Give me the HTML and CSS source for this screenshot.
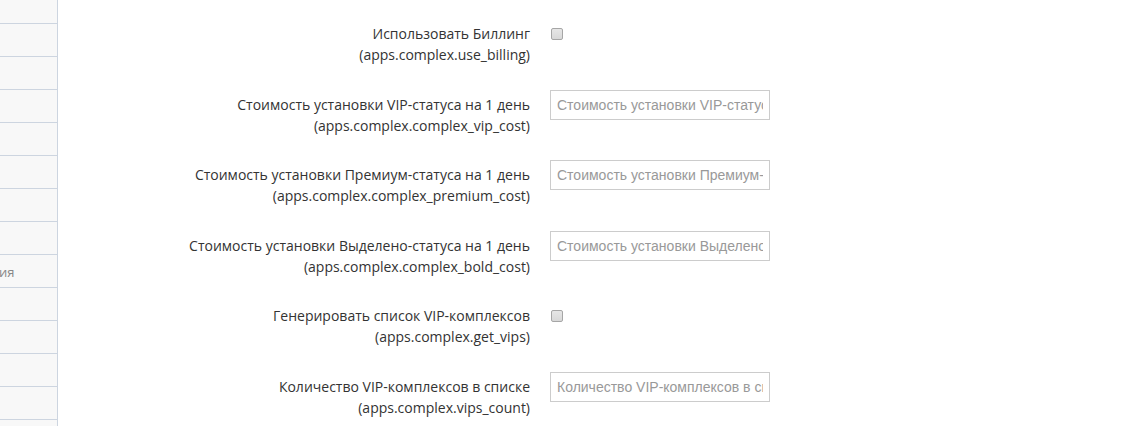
FILE: index.html
```html
<!DOCTYPE html>
<html lang="ru">
<head>
<meta charset="utf-8">
<title>Настройки</title>
<link rel="stylesheet" href="styles.css">
</head>
<body>
<div class="layout">
  <aside class="sidebar">
    <div class="nav-row nav-row-first"></div>
    <div class="nav-row"></div>
    <div class="nav-row"></div>
    <div class="nav-row"></div>
    <div class="nav-row"></div>
    <div class="nav-row"></div>
    <div class="nav-row"></div>
    <div class="nav-row"></div>
    <div class="nav-row"><span class="nav-text">ия</span></div>
    <div class="nav-row"></div>
    <div class="nav-row"></div>
    <div class="nav-row"></div>
    <div class="nav-row"></div>
    <div class="nav-row"></div>
  </aside>
  <main class="content">
    <form class="settings">
      <div class="group">
        <label class="label">Использовать Биллинг<br>(apps.complex.use_billing)</label>
        <div class="control"><input type="checkbox" class="check"></div>
      </div>
      <div class="group">
        <label class="label">Стоимость установки VIP-статуса на 1 день<br>(apps.complex.complex_vip_cost)</label>
        <div class="control"><input type="text" class="field" placeholder="Стоимость установки VIP-статуса на 1 день"></div>
      </div>
      <div class="group">
        <label class="label">Стоимость установки Премиум-статуса на 1 день<br>(apps.complex.complex_premium_cost)</label>
        <div class="control"><input type="text" class="field" placeholder="Стоимость установки Премиум-статуса на 1 день"></div>
      </div>
      <div class="group">
        <label class="label">Стоимость установки Выделено-статуса на 1 день<br>(apps.complex.complex_bold_cost)</label>
        <div class="control"><input type="text" class="field" placeholder="Стоимость установки Выделено-статуса на 1 день"></div>
      </div>
      <div class="group">
        <label class="label">Генерировать список VIP-комплексов<br>(apps.complex.get_vips)</label>
        <div class="control"><input type="checkbox" class="check"></div>
      </div>
      <div class="group">
        <label class="label">Количество VIP-комплексов в списке<br>(apps.complex.vips_count)</label>
        <div class="control"><input type="text" class="field" placeholder="Количество VIP-комплексов в списке"></div>
      </div>
    </form>
  </main>
</div>
</body>
</html>
```
FILE: styles.css
```css
html, body {
  margin: 0;
  padding: 0;
  background: #fff;
  height: 100%;
  overflow: hidden;
}
body {
  font-family: "Open Sans", "Liberation Sans", sans-serif;
  font-size: 14px;
  color: #333;
}
.layout {
  display: flex;
  height: 426px;
}
.sidebar {
  width: 57px;
  flex: 0 0 57px;
  background: #f8f8f8;
  border-right: 1px solid #cdd5e0;
  overflow: hidden;
}
.nav-row {
  height: 32px;
  border-bottom: 1px solid #cdd5e0;
  display: flex;
  align-items: center;
  color: #888;
  font-size: 13px;
}
.nav-row-first {
  height: 23px;
}
.nav-text {
  margin-left: -1px;
  padding-top: 1px;
}
.content {
  flex: 1;
  padding-top: 19px;
}
.settings {
  display: flex;
  flex-direction: column;
  gap: 24.6px;
}
.group {
  display: grid;
  grid-template-columns: 472px 220px;
  column-gap: 20px;
  align-items: start;
}
.label {
  text-align: right;
  line-height: 21px;
  padding-top: 4px;
  color: #333;
}
.control {
  display: flex;
}
.check {
  -webkit-appearance: none;
  appearance: none;
  width: 12px;
  height: 12px;
  margin: 9px 0 0 1px;
  border: 1px solid #a6a6a6;
  border-radius: 2px;
  background: linear-gradient(#e6e6e6, #d8d8d8);
  box-sizing: border-box;
}
.field {
  width: 220px;
  height: 30px;
  box-sizing: border-box;
  border: 1px solid #ccc;
  padding: 0 6px;
  font-family: "Liberation Sans", Arial, sans-serif;
  font-size: 14px;
  color: #555;
  background: #fff;
  border-radius: 0;
  margin: 0;
}
.field::placeholder {
  color: #999;
}
```
